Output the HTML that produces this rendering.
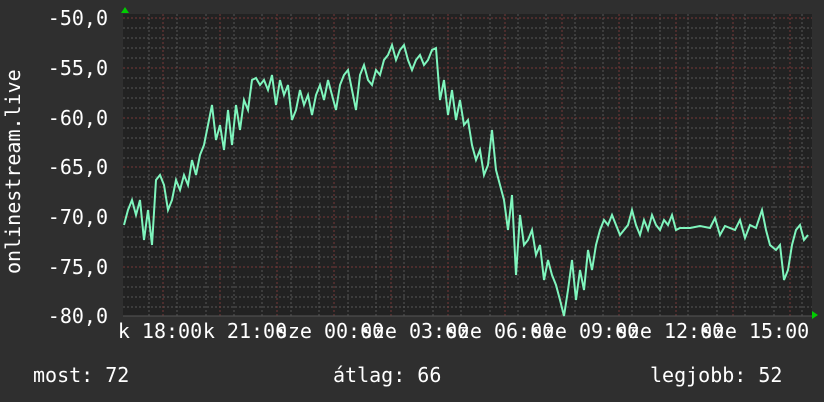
<!DOCTYPE html>
<html><head><meta charset="utf-8"><style>
html,body{margin:0;padding:0;background:#2f2f2f;}
svg{display:block}
text{font-family:"DejaVu Sans Mono","Liberation Mono",monospace;fill:#fff;font-size:20px}
</style></head><body>
<svg width="824" height="402" viewBox="0 0 824 402">
<rect width="824" height="402" fill="#2f2f2f"/>
<rect x="123" y="14" width="689" height="302" fill="#222"/>
<g stroke="#555" stroke-width="1" stroke-dasharray="2,2">
<path d="M123 28H812M123 38H812M123 48H812M123 58H812M123 78H812M123 88H812M123 98H812M123 108H812M123 128H812M123 138H812M123 148H812M123 158H812M123 177H812M123 187H812M123 197H812M123 207H812M123 227H812M123 237H812M123 247H812M123 257H812M123 277H812M123 287H812M123 297H812M123 307H812"/>
<path d="M149 14V316M177 14V316M206 14V316M234 14V316M262 14V316M291 14V316M319 14V316M348 14V316M376 14V316M404 14V316M433 14V316M461 14V316M490 14V316M518 14V316M546 14V316M575 14V316M603 14V316M632 14V316M660 14V316M688 14V316M717 14V316M745 14V316M774 14V316M802 14V316"/>
</g>
<g stroke="#763838" stroke-width="1" stroke-dasharray="2,2">
<path d="M123 18H812M123 68H812M123 118H812M123 167H812M123 217H812M123 267H812"/>
<path d="M163 14V318M220 14V318M277 14V318M334 14V318M391 14V318M448 14V318M505 14V318M562 14V318M619 14V318M676 14V318M733 14V318M790 14V318"/>
</g>
<path d="M123 316H812" stroke="#555"/>
<polygon points="121,13 129,13 125,7" fill="#0c0"/>
<polygon points="812,311 812,319 818,315" fill="#0c0"/>
<polyline fill="none" stroke="#7ff5bd" stroke-width="2" points="124,225 128,210 132,200 136,215 140,200 144,240 148,210 152,245 156,180 160,175 164,185 168,210 172,200 176,180 180,190 184,175 188,185 192,160 196,175 200,155 204,145 208,125 212,105 216,140 220,125 224,150 228,110 232,145 236,105 240,130 244,100 248,110 252,80 256,78 260,85 264,80 268,90 272,75 276,105 280,80 284,95 288,85 292,120 296,110 300,90 304,105 308,95 312,115 316,95 320,85 324,100 328,80 332,95 336,110 340,85 344,75 348,70 352,90 356,110 360,75 364,65 368,80 372,85 376,70 380,75 384,60 388,55 392,45 396,60 400,50 404,45 408,60 412,70 416,60 420,55 424,65 428,60 432,50 436,48 440,100 444,80 448,115 452,90 456,120 460,100 464,125 468,120 472,145 476,160 480,150 484,175 488,165 492,130 496,170 500,185 504,200 508,230 512,195 516,275 520,215 524,245 528,240 532,230 536,255 540,245 544,280 548,260 552,275 556,285 560,300 564,316 568,290 572,260 576,300 580,270 584,290 588,250 592,270 596,245 600,230 604,220 608,225 612,215 616,225 620,235 624,230 628,225 632,210 636,225 640,235 644,220 648,230 652,215 656,225 660,230 664,220 668,225 672,215 676,230 680,228 690,228 700,226 710,228 715,218 720,235 725,226 735,230 740,220 745,238 750,225 756,228 762,210 766,230 770,245 776,250 780,245 784,280 788,270 792,245 796,230 800,225 804,240 808,235"/>
<g text-anchor="end">
<text x="108" y="25">-50,0</text>
<text x="108" y="75">-55,0</text>
<text x="108" y="125">-60,0</text>
<text x="108" y="174">-65,0</text>
<text x="108" y="224">-70,0</text>
<text x="108" y="274">-75,0</text>
<text x="108" y="323">-80,0</text>
</g>
<text transform="translate(20,274) rotate(-90)" font-size="21">onlinestream.live</text>
<g text-anchor="middle">
<text x="160" y="338">k 18:00</text>
<text x="245" y="338">k 21:00</text>
<text x="330" y="338">sze 00:00</text>
<text x="415" y="338">sze 03:00</text>
<text x="500" y="338">sze 06:00</text>
<text x="585" y="338">sze 09:00</text>
<text x="670" y="338">sze 12:00</text>
<text x="755" y="338">sze 15:00</text>
</g>
<text x="33" y="382">most: 72</text>
<text x="333" y="382">átlag: 66</text>
<text x="650" y="382">legjobb: 52</text>
</svg>
</body></html>
